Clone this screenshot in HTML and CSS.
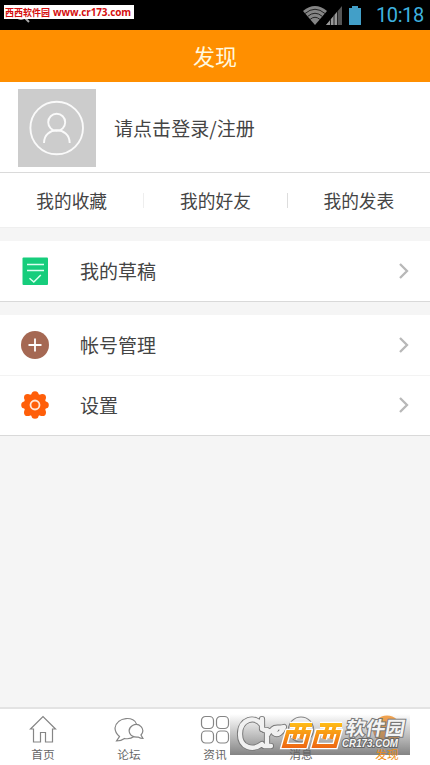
FILE: index.html
```html
<!DOCTYPE html>
<html lang="zh-CN">
<head>
<meta charset="utf-8">
<title>发现</title>
<link rel="stylesheet" href="styles.css">
</head>
<body>
<div class="screen">
  <div class="status">
    <svg class="search" width="16" height="16" viewBox="0 0 16 16" fill="none" stroke="#aaa" stroke-width="2"><circle cx="7" cy="6" r="5"/><path d="M11 10l4 4"/></svg>
    <div class="site-tag"><span class="tag-name">西西软件园</span><span class="tag-url">www.cr173.com</span></div>
    <svg class="signals" width="60" height="21" viewBox="0 0 60 21">
      <path d="M0 6Q12-4 24 6L12 20Z" fill="#858585"/>
      <g fill="none" stroke="#222" stroke-width="1"><path d="M2 8.500Q12 0 22 8.500M4.500 11.500Q12 5 19.500 11.500M7 14.500Q12 10 17 14.500"/></g>
      <path d="M23 20L39 1V20Z" fill="#555"/><path d="M23 20L34 7V20Z" fill="#999"/>
      <path d="M27.500 14v6M31 10v10M34.500 6v14" stroke="#222"/>
      <path d="M46 3h3V1h6v2h3v17H46Z" fill="#429fc8"/>
    </svg>
    <span class="clock">10:18</span>
  </div>
  <header class="title">发现</header>
  <section class="profile">
    <svg class="avatar" width="78" height="78" viewBox="0 0 78 78"><path fill="#ccc" d="M0 0h78v78H0z"/><g fill="none" stroke="#fafafa" stroke-width="1.900"><circle cx="38.700" cy="39" r="26.300"/><circle cx="38.700" cy="33.300" r="8.500"/><path d="M26 54C26 37 51.700 37 51.700 54"/></g></svg>
    <span class="login">请点击登录/注册</span>
  </section>
  <nav class="links"><span>我的收藏</span><span>我的好友</span><span>我的发表</span></nav>
  <section class="group">
    <div class="row">
      <svg class="icon" width="28" height="28" viewBox="0 0 28 28"><rect x="1.500" y=".5" width="25.500" height="27.500" rx="1" fill="#16cd7c"/><path d="M6 7.500h17M6 13.500h17M8.500 21.200l4.300 3.800 7-7" fill="none" stroke="#dcfff0" stroke-width="1.500"/></svg>
      <span class="label">我的草稿</span>
      <svg class="chevron" width="10" height="16" viewBox="0 0 10 16"><path d="M1 1l7 7-7 7"/></svg>
    </div>
  </section>
  <section class="group">
    <div class="row">
      <svg class="icon" width="28" height="28" viewBox="0 0 28 28"><circle cx="14" cy="14" r="14" fill="#a56853"/><path d="M7.500 14h13M14 7.500v13" stroke="#fff" stroke-width="1.800"/></svg>
      <span class="label">帐号管理</span>
      <svg class="chevron" width="10" height="16" viewBox="0 0 10 16"><path d="M1 1l7 7-7 7"/></svg>
    </div>
    <div class="row">
      <svg class="icon" width="28" height="28" viewBox="0 0 28 28"><g fill="#ff5f0a"><circle cx="14" cy="14" r="11.300"/><circle cx="14" cy="3.800" r="3.600"/><circle cx="14" cy="24.200" r="3.600"/><circle cx="3.800" cy="14" r="3.600"/><circle cx="24.200" cy="14" r="3.600"/><circle cx="6.600" cy="6.600" r="3.600"/><circle cx="21.400" cy="6.600" r="3.600"/><circle cx="6.600" cy="21.400" r="3.600"/><circle cx="21.400" cy="21.400" r="3.600"/></g><circle cx="14" cy="14" r="4.500" fill="none" stroke="#ffe6d8" stroke-width="1.800"/></svg>
      <span class="label">设置</span>
      <svg class="chevron" width="10" height="16" viewBox="0 0 10 16"><path d="M1 1l7 7-7 7"/></svg>
    </div>
  </section>
  <nav class="tabs">
    <div class="tab"><svg width="30" height="30" viewBox="0 0 30 30"><path d="M2.500 15L15 2.500 27.500 15H24.500V28H17.500V18.500H12.500V28H5.500V15Z"/></svg><span>首页</span></div>
    <div class="tab"><svg width="30" height="30" viewBox="0 0 30 30"><path d="M22.700 10.500C21 2 3 2 1 14c0 4 1.500 6 4.500 8.500L2.500 27c4 0 6-1 8-2.500 4 .7 7 0 9.500-2"/><path d="M29 24.500L27 21c5-6-2-13-8.500-9.500-6 4-3.500 12 5.500 11.500 2 1.200 3 1.500 5 1.500Z"/></svg><span>论坛</span></div>
    <div class="tab"><svg width="30" height="30" viewBox="0 0 30 30"><rect x="1.500" y="2.500" width="12" height="12" rx="4"/><rect x="16.500" y="2.500" width="12" height="12" rx="4"/><rect x="1.500" y="17" width="12" height="12" rx="4"/><rect x="16.500" y="17" width="12" height="12" rx="4"/></svg><span>资讯</span></div>
    <div class="tab"><svg width="30" height="30" viewBox="0 0 30 30"><circle cx="15" cy="15.500" r="12.500"/></svg><span>消息</span></div>
    <div class="tab active"><svg width="30" height="30" viewBox="0 0 30 30"><circle cx="15" cy="15.500" r="14"/></svg><span>发现</span></div>
  </nav>
  <div class="watermark">
    <svg width="180" height="41" viewBox="0 0 180 41">
      <defs>
        <linearGradient id="flame" gradientUnits="userSpaceOnUse" x1="0" y1="9" x2="0" y2="34"><stop stop-color="#ffbd16"/><stop offset="1" stop-color="#ee6512"/></linearGradient>
        <g id="swash"><path d="M32 11C25 1 10 5 10 20c0 14 13 17 22 10M32 5v10M37 16v16M34 32h7M34 16h3M38 20c1-3 4-4 8-4"/><path d="M43 15c3-3 7 0 11-2-2 5-6 9-10 6Z"/></g>
        <path id="west" d="M60 11H82M58 18H79L75 32H54ZM68 11L64 25M75 11L71 25"/>
      </defs>
      <g fill="none" stroke-linecap="round" stroke-linejoin="round"><use href="#swash" stroke="#777" stroke-width="6.200"/><use href="#swash" stroke="#f1f1f1" stroke-width="4.300"/></g>
      <g fill="none">
        <g stroke="#fff" stroke-width="6.500"><use href="#west"/><use href="#west" x="30"/></g>
        <g stroke="url(#flame)" stroke-width="3.800"><use href="#west"/><use href="#west" x="30"/></g>
      </g>
      <text class="wm-name" transform="translate(115 21) skewX(-10)" textLength="59" lengthAdjust="spacingAndGlyphs">软件园</text>
      <text class="wm-url" x="112" y="33" textLength="56" lengthAdjust="spacingAndGlyphs">CR173.COM</text>
    </svg>
  </div>
</div>
</body>
</html>
```
FILE: styles.css
```css
* { box-sizing: border-box; }
body { margin: 0; font-family: "Noto Sans CJK SC", sans-serif; color: #444; }
.screen { position: relative; width: 430px; height: 765px; overflow: hidden; display: flex; flex-direction: column; background: #f5f5f5; }
.status { position: relative; flex: 0 0 30px; display: flex; align-items: center; justify-content: flex-end; padding-right: 6px; background: #000; }
.search { position: absolute; left: 14px; top: 8px; }
.site-tag { position: absolute; left: 4px; top: 5px; width: 130px; height: 14px; background: #fff; color: #d50f0f; font-weight: 700; line-height: 15px; white-space: nowrap; display: flex; gap: 3px; padding-left: 1px; }
.tag-name { font-size: 9px; }
.tag-url { font-size: 10px; font-family: "Open Sans", sans-serif; letter-spacing: -.1px; }
.signals { margin-right: 13px; }
.clock { width: 48px; font: 20px/30px Roboto, sans-serif; color: #3eb1df; white-space: nowrap; letter-spacing: -.4px; }
.title { flex: 0 0 52px; background: #ff8f00; color: #fff8df; font-size: 22px; line-height: 51px; text-align: center; }
.profile { flex: 0 0 91px; background: #fff; border-bottom: 1px solid #dadada; display: flex; align-items: center; padding: 1px 0 0 18px; gap: 18px; }
.login { font-size: 19px; line-height: 28px; letter-spacing: .05px; }
.links { flex: 0 0 55px; background: #fff; border-bottom: 1px solid #efefef; display: grid; grid-template-columns: repeat(3, 1fr); align-items: center; text-align: center; font-size: 17.700px; line-height: 15px; }
.links span + span { border-left: 1px solid #eee; }
.links span:last-child { border-left-color: #ddd; }
.group { flex: none; margin-top: 13px; background: #fff; border-bottom: 1px solid #d9d9d9; }
.group + .group { margin-top: 13px; }
.row { height: 60px; display: flex; align-items: center; padding: 0 21px; }
.row + .row { border-top: 1px solid #f3f3f3; padding-bottom: 1px; }
.icon { margin-right: 31px; }
.label { flex: 1; font-size: 19px; line-height: 28px; }
.chevron { fill: none; stroke: #b8b8b8; stroke-width: 2.300; }
.tabs { height: 58px; margin-top: auto; border-top: 2px solid #e3e3e3; background: #fff; display: grid; grid-template-columns: repeat(5, 1fr); }
.tab { display: flex; flex-direction: column; align-items: center; padding-top: 5px; color: #666; font-size: 11.700px; line-height: 18px; }
.tab svg { fill: none; stroke: #858585; stroke-width: 1.200; }
.tab span { position: relative; z-index: 2; margin-top: 1px; }
.tab.active { color: #ee8d15; }
.tab.active svg { fill: #f8a54d; stroke: none; }
.watermark { position: absolute; z-index: 1; left: 230px; top: 714px; height: 41px; width: 180px; background: linear-gradient(rgba(110,110,110,0), rgba(110,110,110,.85)); }
.wm-name { font-size: 19px; font-weight: 700; fill: #f4f4f4; stroke: #777; stroke-width: 2px; paint-order: stroke; }
.wm-url { font: italic bold 10px "Liberation Sans", sans-serif; fill: #f4f4f4; stroke: #666; stroke-width: 2px; paint-order: stroke; }
```
